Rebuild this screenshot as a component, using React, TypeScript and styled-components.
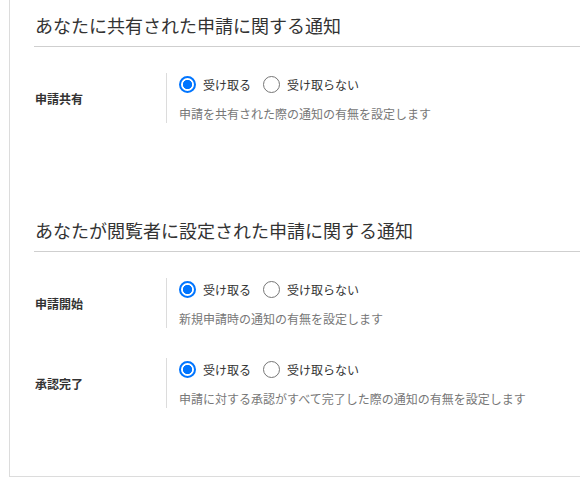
import React from "react";
import styled, { createGlobalStyle } from "styled-components";

const Global = createGlobalStyle`
  html, body { margin: 0; padding: 0; background: #fff; }
  body {
    font-family: "Noto Sans CJK JP", "Noto Sans", sans-serif;
    color: #333;
  }
`;

const Card = styled.div`
  margin-left: 9px;
  width: 571px;
  height: 477px;
  box-sizing: border-box;
  border-left: 1px solid #dcdcdc;
  border-bottom: 1px solid #dcdcdc;
  padding: 12px 0 0 24px;
`;

const Section = styled.section<{ $gap: number }>`
  margin-bottom: ${(p) => p.$gap}px;
`;

const Heading = styled.h2`
  margin: 0;
  padding: 0 0 8px 1px;
  font-size: 18px;
  font-weight: 400;
  line-height: 26px;
  color: #333;
  border-bottom: 1px solid #cfcfcf;
`;

const Rows = styled.div`
  display: flex;
  flex-direction: column;
  gap: 30px;
  margin-top: 26px;
`;

const Row = styled.div`
  display: flex;
  align-items: center;
`;

const Label = styled.div`
  width: 132px;
  padding-left: 1px;
  box-sizing: border-box;
  font-size: 12px;
  font-weight: 700;
  color: #333;
`;

const Body = styled.div`
  border-left: 1px solid #dcdcdc;
  padding-left: 12px;
  height: 50px;
  display: flex;
  flex-direction: column;
`;

const RadioGroup = styled.div`
  display: flex;
  align-items: center;
  height: 22px;
  gap: 12px;
`;

const Option = styled.label`
  display: flex;
  align-items: center;
  gap: 7px;
  font-size: 12px;
  color: #333;
  cursor: pointer;
`;

const Radio = styled.input`
  appearance: none;
  -webkit-appearance: none;
  width: 17px;
  height: 17px;
  margin: 0;
  box-sizing: border-box;
  border: 1px solid #767676;
  border-radius: 50%;
  background: #fff;
  &:checked {
    border: 2px solid #0075ff;
    background: radial-gradient(circle, #0075ff 0 4.3px, #fff 5px);
  }
`;

const Description = styled.div`
  margin-top: 10px;
  font-size: 12px;
  line-height: 18px;
  color: #777;
`;

type Setting = { name: string; label: string; desc: string };

const SettingRow = ({ s }: { s: Setting }) => (
  <Row>
    <Label>{s.label}</Label>
    <Body>
      <RadioGroup>
        <Option>
          <Radio type="radio" name={s.name} defaultChecked />
          受け取る
        </Option>
        <Option>
          <Radio type="radio" name={s.name} />
          受け取らない
        </Option>
      </RadioGroup>
      <Description>{s.desc}</Description>
    </Body>
  </Row>
);

const sections: { title: string; gap: number; items: Setting[] }[] = [
  {
    title: "あなたに共有された申請に関する通知",
    gap: 94,
    items: [
      { name: "share", label: "申請共有", desc: "申請を共有された際の通知の有無を設定します" },
    ],
  },
  {
    title: "あなたが閲覧者に設定された申請に関する通知",
    gap: 0,
    items: [
      { name: "start", label: "申請開始", desc: "新規申請時の通知の有無を設定します" },
      { name: "done", label: "承認完了", desc: "申請に対する承認がすべて完了した際の通知の有無を設定します" },
    ],
  },
];

export default function App() {
  return (
    <>
      <Global />
      <Card>
        {sections.map((sec) => (
          <Section key={sec.title} $gap={sec.gap}>
            <Heading>{sec.title}</Heading>
            <Rows>
              {sec.items.map((s) => (
                <SettingRow key={s.name} s={s} />
              ))}
            </Rows>
          </Section>
        ))}
      </Card>
    </>
  );
}
